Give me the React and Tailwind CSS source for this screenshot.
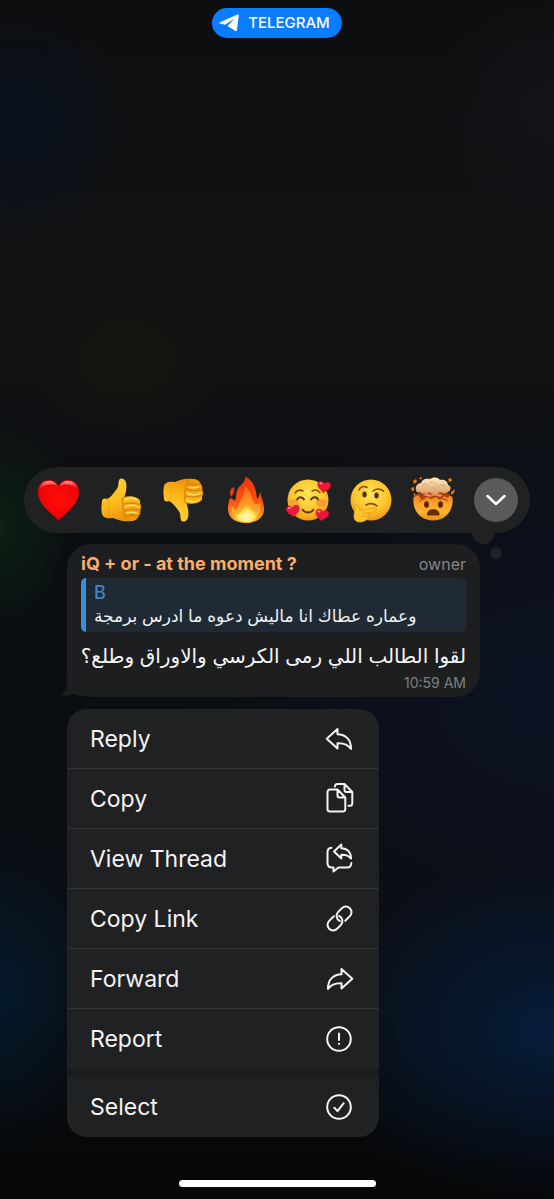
function HeartEmoji() {
  return (
    <svg viewBox="0 0 44 44" className="size-11 overflow-visible" aria-hidden="true">
      <defs>
        <radialGradient id="heartFill" cx="0.5" cy="0.45" r="0.6">
          <stop offset="0" stopColor="#ff0d08" />
          <stop offset="0.7" stopColor="#f40407" />
          <stop offset="1" stopColor="#d5040c" />
        </radialGradient>
        <linearGradient id="heartShine" x1="0" y1="0" x2="0" y2="1">
          <stop offset="0" stopColor="#ffb3b0" stopOpacity="0.9" />
          <stop offset="1" stopColor="#ff4a45" stopOpacity="0" />
        </linearGradient>
      </defs>
      <path d="M22.5 43C19 37 2 28 2 14C2 6 7 2 13 2C18 2 21 5 22.5 8C24 5 27 2 32 2C38 2 43 6 43 14C43 28 26 37 22.5 43Z" fill="url(#heartFill)" />
      <path d="M3.5 12C4 6 8 3 13 3C17 3 20 5 21 8C17 5.5 8 5.500 3.500 12Z" fill="url(#heartShine)" />
      <path d="M24 8C25 5 28 3 32 3C37 3 41 6 41.500 12C37 5.500 28 5.500 24 8Z" fill="url(#heartShine)" />
    </svg>
  )
}

function ThumbEmoji({ down }) {
  return (
    <svg viewBox="0 0 44 44" className={down ? 'size-11 overflow-visible -scale-y-100' : 'size-11 overflow-visible'} aria-hidden="true">
      <defs>
        <linearGradient id="thumbFill" x1="0" y1="0" x2="0.3" y2="1">
          <stop offset="0" stopColor="#ffd43b" />
          <stop offset="0.6" stopColor="#ffbd1c" />
          <stop offset="1" stopColor="#f0960c" />
        </linearGradient>
      </defs>
      <path d="M3 23C3 21 5 20 8 21C11 20 14 16 17 12C20 9 19 5 20 2C21 -0.500 25 0 26.500 3C28.500 8 27 14 25.500 19C29 18 35 18 38 20C41 21 41.500 23 41 26C42.500 28 42.500 30 41 32C42 35 41 37 39.500 38C39 41 36 43 32 43C24 44 19 42 14 40C9 41 4 40 3 36C2 32 2.500 27 3 23Z" fill="url(#thumbFill)" />
      <path d="M25.500 19C22.500 21 22 24 25 26C22.500 28 22.500 31 25.500 32.500C23.500 34 24 37 27 38C25.500 39.500 26 41.500 28 43" fill="none" stroke="#d67d06" strokeWidth="1.1" />
      <path d="M25 26C30 24.500 36 25 41 26.500M25.500 32.500C31 31 36 31 41 32.500M27 38C31 37 36 37 39.500 38.200" fill="none" stroke="#d98508" strokeWidth="1.3" strokeLinecap="round" />
      <path d="M26.500 21.500C30 20 35 20 38.500 22M27 28.500C31 27 36 27 39.500 29M28 34.800C31 34 35 34 38 35.500" fill="none" stroke="#ffe066" strokeWidth="1.4" strokeLinecap="round" />
      <path d="M8 21C11 24 11 35 8 39.500" fill="none" stroke="#efa315" strokeWidth="1.2" opacity="0.7" />
    </svg>
  )
}

function FireEmoji() {
  return (
    <svg viewBox="0 0 44 44" className="size-11 overflow-visible" aria-hidden="true">
      <defs>
        <linearGradient id="fireOuter" x1="0" y1="0" x2="0" y2="1">
          <stop offset="0" stopColor="#e8340c" />
          <stop offset="0.55" stopColor="#fb5412" />
          <stop offset="1" stopColor="#ffb52a" />
        </linearGradient>
        <linearGradient id="fireMiddle" x1="0" y1="0" x2="0" y2="1">
          <stop offset="0" stopColor="#ff6a18" />
          <stop offset="1" stopColor="#ffc832" />
        </linearGradient>
        <radialGradient id="fireCore" cx="0.5" cy="0.75" r="0.55">
          <stop offset="0" stopColor="#fffbd0" />
          <stop offset="0.6" stopColor="#ffe75a" />
          <stop offset="1" stopColor="#ffb022" />
        </radialGradient>
      </defs>
      <path d="M21.500 -1.500C31 4 32 12 33 21C35 20 35.500 16 36.500 14C36.500 19 40 23 40 31C40 40 32 45 22 45C12 45 4 40 4 31C4 26 5 23 6 20C8 20.500 10 21.500 11 23C13 17 11.500 12 16 8C20 5 21 2 21.500 -1.500Z" fill="url(#fireOuter)" />
      <path d="M10 9C5.500 11 5 15 7 19C10 16 11 12 10 9Z" fill="#e63a0e" />
      <path d="M21 8C27 13 27 21 31 26C34 27 35 25 36 24C38 35 33 44 22 44C12 44 6.500 38 7.500 27C9 30 10.500 32 13 32C14 24 21 19 21 8Z" fill="url(#fireMiddle)" />
      <path d="M22 24C26 28 26 31 29.500 33.500C31.500 34 32.500 33 33.500 32C34 40 30 44 22 44C14 44 10 40 10.500 34C12.500 36 14 36.500 16 35.500C18 31 22 29 22 24Z" fill="url(#fireCore)" />
    </svg>
  )
}

function FaceBase({ id }) {
  return (
    <>
      <defs>
        <radialGradient id={id} cx="0.5" cy="0.35" r="0.68">
          <stop offset="0" stopColor="#ffe555" />
          <stop offset="0.6" stopColor="#fdc52c" />
          <stop offset="1" stopColor="#ee9212" />
        </radialGradient>
      </defs>
      <circle cx="22" cy="22" r="20.500" fill={`url(#${id})`} />
    </>
  )
}

const smallHeart = 'M0 6C-1 4 -6.500 2 -6.500 -2C-6.500 -6 -1.500 -6.500 0 -3C1.500 -6.500 6.500 -6 6.500 -2C6.500 2 1 4 0 6Z'

function LovedEmoji() {
  return (
    <svg viewBox="0 0 44 44" className="size-11 overflow-visible" aria-hidden="true">
      <FaceBase id="lovedFill" />
      <ellipse cx="8" cy="25" rx="5" ry="4" fill="#f77f3d" opacity="0.5" />
      <ellipse cx="35" cy="25" rx="5" ry="4" fill="#f77f3d" opacity="0.6" />
      <path d="M9 15C11 12 14 11.500 17 13M26 13C29 11.500 32 12 34 14.500" fill="none" stroke="#8a4b0a" strokeWidth="1.5" strokeLinecap="round" />
      <path d="M11 21.500C12.500 18.500 16.500 18.500 18 21.500M25 21.500C26.500 18.500 31 18.500 32 21.500" fill="none" stroke="#5f3108" strokeWidth="1.8" strokeLinecap="round" />
      <path d="M16.500 31.500C19 35.500 25 35.500 27.500 31.500" fill="none" stroke="#6b3208" strokeWidth="1.8" strokeLinecap="round" />
      <g fill="#ee1738" stroke="#c40d2b" strokeWidth="0.5">
        <path d={smallHeart} transform="translate(38 9) rotate(8)" />
        <path d={smallHeart} transform="translate(7 33) rotate(-8)" />
        <path d={smallHeart} transform="translate(36 37) rotate(10)" />
      </g>
      <g fill="#ff8b9a">
        <ellipse cx="35" cy="5.500" rx="1.600" ry="0.900" />
        <ellipse cx="3.500" cy="30" rx="1.600" ry="0.900" />
        <ellipse cx="33" cy="33.500" rx="1.600" ry="0.900" />
      </g>
    </svg>
  )
}

function ThinkingEmoji() {
  return (
    <svg viewBox="0 0 44 44" className="size-11 overflow-visible" aria-hidden="true">
      <FaceBase id="thinkingFill" />
      <path d="M10 12C11.500 8.500 15 7.500 18 9.500" fill="none" stroke="#8a4b0a" strokeWidth="1.6" strokeLinecap="round" />
      <path d="M24 13C27 10.500 31 10.500 34.500 13" fill="none" stroke="#8a4b0a" strokeWidth="1.6" strokeLinecap="round" />
      <ellipse cx="15.500" cy="16.500" rx="2.200" ry="3" fill="#55300c" />
      <ellipse cx="27.500" cy="17.500" rx="2.200" ry="3" fill="#55300c" />
      <path d="M17 27C20 25 25 25 28 28" fill="none" stroke="#8a4b0a" strokeWidth="1.6" strokeLinecap="round" />
      <path d="M6 28C7 26 9 27 9.500 29L11 32C15 33 20 30 25 30C28 30 28 33 25 33.500L19 35C21 39 17 44 11 44C7 44 5 42 5 38Z" fill="#ffc52e" stroke="#e59a18" strokeWidth="0.900" strokeLinejoin="round" />
      <path d="M14 35.500L19 35M13 38.500L18.500 38" fill="none" stroke="#e59a18" strokeWidth="0.900" strokeLinecap="round" />
    </svg>
  )
}

function MindBlownEmoji() {
  return (
    <svg viewBox="0 0 44 44" className="size-11 overflow-visible" aria-hidden="true">
      <defs>
        <linearGradient id="blownFill" x1="0" y1="0" x2="0" y2="1">
          <stop offset="0" stopColor="#f27a17" />
          <stop offset="0.4" stopColor="#fda52a" />
          <stop offset="0.7" stopColor="#fdb42b" />
          <stop offset="1" stopColor="#ed8b12" />
        </linearGradient>
        <linearGradient id="cloudFill" x1="0" y1="0" x2="0" y2="1">
          <stop offset="0" stopColor="#fff0c4" />
          <stop offset="1" stopColor="#dd9a62" />
        </linearGradient>
      </defs>
      <path d="M2.500 19L8 16H36L41.500 19C43 32 35 42.500 22 42.500C9 42.500 1 32 2.500 19Z" fill="url(#blownFill)" />
      <path d="M5 16L12 14H32L39 16L37 20L33 18L29 22L25 19L20 21L16 19L11 22L8 18Z" fill="#a83f17" />
      <path d="M12 17L16 15L20 17L25 15L32 17L29 19L24 17.500L19 19Z" fill="#ef8a55" />
      <path d="M5 12C4 8 7 5 10 5C11 1 16 0 19 1C22 -1.500 28 -1 29 2C34 1 37 4 37 7C41 8 40 13 37 14C34 16 31 15 29 14C26 17 21 17 18 14C15 16 11 16 9 14C7 15 5 14 5 12Z" fill="url(#cloudFill)" />
      <path d="M11 8C13 5 17 6 17 9M19 5C22 3 26 5 25 8M27 10C28 6 33 6 34 9M19 12C20 9 24 9 25 12" fill="none" stroke="#d5a26b" strokeWidth="0.900" />
      <g fill="#e87918">
        <path d="M2 3L5 1L6 4L3 6Z" />
        <path d="M0 10L3 9L3 13L1 13Z" />
        <path d="M8 0L11 -1L10 2Z" />
        <path d="M37 1L40 0L41 3L38 4Z" />
        <path d="M40 14L44 11L43 15L40 17Z" />
        <path d="M2 17L4 15L5 18Z" />
      </g>
      <ellipse cx="15.500" cy="26.500" rx="2.400" ry="3.200" fill="#55270a" />
      <ellipse cx="29.500" cy="26.500" rx="2.400" ry="3.200" fill="#55270a" />
      <path d="M9 23C10 21 12 20.500 14 21M31 21C33 20.500 35 21 36 23" fill="none" stroke="#a4570e" strokeWidth="1.200" strokeLinecap="round" />
      <path d="M16 36.500C16 29.500 28.500 29.500 28.500 36.500C28.500 38 27 37.500 22.300 37.500C17 37.500 16 38 16 36.500Z" fill="#6a2a0c" />
    </svg>
  )
}

function MenuIcon({ children }) {
  return (
    <svg
      viewBox="0 0 28 28"
      className="size-7 overflow-visible"
      fill="none"
      stroke="currentColor"
      strokeWidth="2"
      strokeLinecap="round"
      strokeLinejoin="round"
      aria-hidden="true"
    >
      {children}
    </svg>
  )
}

const arrowPath = 'M12.500 4L1.700 13.700L12.500 23.500V18.300C18 18 22.500 19 26 24C26.200 14 20 9.300 12.500 9.200Z'
const linkPath = 'M2.500 5.600H9A5.600 5.600 0 0 0 9 -5.600H3.800A5.600 5.600 0 0 0 -1.500 2'

const reactions = [
  { label: 'Heart', icon: <HeartEmoji /> },
  { label: 'Thumbs up', icon: <ThumbEmoji /> },
  { label: 'Thumbs down', icon: <ThumbEmoji down /> },
  { label: 'Fire', icon: <FireEmoji /> },
  { label: 'Loved', icon: <LovedEmoji /> },
  { label: 'Thinking', icon: <ThinkingEmoji /> },
  { label: 'Mind blown', icon: <MindBlownEmoji /> },
]

const actions = [
  {
    label: 'Reply',
    icon: <MenuIcon><path d={arrowPath} /></MenuIcon>,
  },
  {
    label: 'Copy',
    icon: (
      <MenuIcon>
        <path d="M12.500 4.500H5A2.500 2.500 0 0 0 2.500 7V24A2.500 2.500 0 0 0 5 26.500H17.800A2.500 2.500 0 0 0 20.300 24V12.500ZV10.500A2 2 0 0 0 14.500 12.500H20.300" />
        <path d="M9.800 1.500C10 0 11 -1 12.500 -1H19.500L27.300 7V18.300A2.500 2.500 0 0 1 24.800 20.800H23.500M19.500 -1V5A2 2 0 0 0 21.500 7H27.300" />
      </MenuIcon>
    ),
  },
  {
    label: 'View Thread',
    icon: (
      <MenuIcon>
        <path d="M6.500 2.800C4 3 2.500 4.800 2.500 7.500V18C2.500 21 4 22.500 7 22.500H8.500V26.500L13.500 22.500H22C24.800 22.500 26.300 21 26.300 18" />
        <path d="M16.300 -0.500L9 6.500L16.300 13.500V9.800C20.500 9.600 23.500 10.500 26 13.500C26 7 22 3.300 16.300 3.200Z" />
      </MenuIcon>
    ),
  },
  {
    label: 'Copy Link',
    icon: (
      <MenuIcon>
        <path d={linkPath} transform="translate(14.500 13.500) rotate(-45)" />
        <path d={linkPath} transform="translate(14.500 13.500) rotate(135)" />
      </MenuIcon>
    ),
  },
  {
    label: 'Forward',
    icon: <MenuIcon><path d={arrowPath} transform="translate(29 0) scale(-1 1)" /></MenuIcon>,
  },
  {
    label: 'Report',
    icon: (
      <MenuIcon>
        <circle cx="14" cy="14" r="11.800" />
        <path d="M14 8.500V15M14 18.800V19" />
      </MenuIcon>
    ),
  },
]

function ActionButton({ label, icon }) {
  return (
    <button className="flex h-15 w-full items-center justify-between pr-[26px] pl-[23px] text-[23px] leading-8 text-[#f4f4f4]">
      <span>{label}</span>
      {icon}
    </button>
  )
}

export default function App() {
  return (
    <div className="flex min-h-screen flex-col bg-[#0b0c0e] bg-[radial-gradient(ellipse_80px_110px_at_0%_44%,#0c2013,transparent),radial-gradient(ellipse_260px_170px_at_100%_86%,#061d3a,transparent),radial-gradient(ellipse_110px_160px_at_0%_83%,#04192a,transparent),radial-gradient(ellipse_380px_300px_at_100%_58%,#0c1222,transparent),radial-gradient(ellipse_120px_120px_at_100%_9%,#15131a,transparent),radial-gradient(ellipse_110px_120px_at_3%_10%,#08111e,transparent),radial-gradient(ellipse_100px_80px_at_23%_30%,#15170f,transparent),linear-gradient(to_bottom,#0d0e0f,#101113_20%,#101112_30%,#0a0d12_45%,#0b0d12_80%,#060708_98%)] font-['Inter','DejaVu_Sans',sans-serif] text-white">
      <header className="flex justify-center pt-2">
        <a href="#telegram" className="flex h-[30px] items-center gap-2 rounded-full bg-[#0a7cff] pr-3 pl-[7px] text-[15px] leading-5 font-medium">
          <svg viewBox="0 0 21 18" className="h-[18px] w-[21px]" fill="currentColor" aria-hidden="true">
            <path d="M1 8.300L18.500 0.600C19.400 0.300 19.900 0.800 19.700 1.700L18 16C17.700 17.200 17 17.400 16 16.800L8.500 12L15.500 4.500L6 10.700L1.100 9.500C0.200 9.200 0.200 8.700 1 8.300Z" />
          </svg>
          TELEGRAM
        </a>
      </header>

      <main className="mt-auto">
        {/* Reaction bar */}
        <div className="relative mx-6 flex h-[66px] items-center justify-between rounded-full bg-[#1f2122] px-3">
          <span className="absolute right-[35px] -bottom-[11px] size-[23px] rounded-full bg-[#1f2122]" />
          <span className="absolute right-7 -bottom-[26px] size-3 rounded-full bg-[#1f2122]" />
          {reactions.map((reaction) => (
            <button key={reaction.label} aria-label={reaction.label} className="relative">
              {reaction.icon}
            </button>
          ))}
          <button aria-label="More reactions" className="relative flex size-11 items-center justify-center rounded-full bg-[#585a5b]">
            <svg viewBox="0 0 20 12" className="h-3 w-5" fill="none" stroke="white" strokeWidth="2.500" strokeLinecap="round" strokeLinejoin="round" aria-hidden="true">
              <path d="M1.500 2L10 10L18.500 2" />
            </svg>
          </button>
        </div>

        {/* Message */}
        <article className="relative mt-[11px] mr-[74px] ml-[67px] rounded-[24px] bg-[#1d1e20] px-[14px] pt-2 pb-1">
          <svg viewBox="0 0 22 22" className="absolute bottom-0 -left-[7px] size-[22px]" fill="#1d1e20" aria-hidden="true">
            <path d="M7 0V10C7 15 4.500 18.500 0.500 20.500C6 21.500 10 21 13 18.500L22 22V0Z" />
          </svg>
          <div className="relative flex items-center justify-between leading-6">
            <h1 className="text-lg leading-6 font-bold text-[#f9ad6c]">iQ + or - at the moment ?</h1>
            <span className="text-base leading-6 text-[#858688]">owner</span>
          </div>
          <blockquote className="relative mt-[2px] rounded-[5px] border-l-[5px] border-[#3d8ed9] bg-[#202a34] px-2 pt-[5px] pb-[3px]">
            <div className="text-lg leading-5 font-medium text-[#3d85c4]">B</div>
            <p dir="rtl" className="text-left text-[17px] leading-[26px] whitespace-nowrap text-[#eef1f3]">
              وعماره عطاك انا ماليش دعوه ما ادرس برمجة
            </p>
          </blockquote>
          <p dir="rtl" className="relative mt-2 text-xl leading-8 whitespace-nowrap text-[#f6f6f6]">
            لقوا الطالب اللي رمى الكرسي والاوراق وطلع؟
          </p>
          <time className="relative block pt-px text-right text-sm leading-5 text-[#7d7e80]">10:59 AM</time>
        </article>

        {/* Context menu */}
        <nav className="mt-3 ml-[67px] w-[312px] overflow-hidden rounded-[20px] bg-[#202122]">
          <div className="divide-y divide-[#323334]">
            {actions.map((action) => (
              <ActionButton key={action.label} {...action} />
            ))}
          </div>
          <div className="h-2 bg-[#1a1b1c]" />
          <ActionButton
            label="Select"
            icon={
              <MenuIcon>
                <circle cx="14" cy="14" r="11.800" />
                <path d="M9.300 14.700L12.500 18.200L18.700 10.200" />
              </MenuIcon>
            }
          />
        </nav>
      </main>

      <footer className="flex justify-center pt-[43px] pb-3">
        <div className="h-[7px] w-[197px] rounded-full bg-white" />
      </footer>
    </div>
  )
}
